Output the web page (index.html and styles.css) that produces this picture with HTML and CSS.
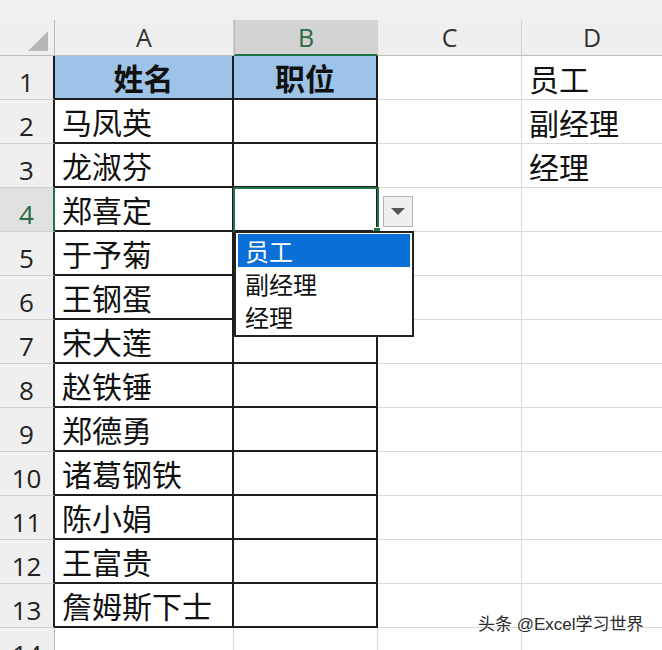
FILE: index.html
```html
<!DOCTYPE html>
<html lang="zh">
<head>
<meta charset="utf-8">
<link rel="stylesheet" href="styles.css">
</head>
<body>
<div class="sheet">
  <div class="strip"></div>

  <div class="ch corner"><span class="tri"></span></div>
  <div class="ch">A</div>
  <div class="ch sel">B</div>
  <div class="ch">C</div>
  <div class="ch last">D</div>

  <div class="rh">1</div><div class="c t hd">姓名</div><div class="c t hd">职位</div><div class="c"></div><div class="c d">员工</div>
  <div class="rh">2</div><div class="c t">马凤英</div><div class="c t"></div><div class="c"></div><div class="c d">副经理</div>
  <div class="rh">3</div><div class="c t">龙淑芬</div><div class="c t"></div><div class="c"></div><div class="c d">经理</div>
  <div class="rh rsel">4</div><div class="c t">郑喜定</div><div class="c t"></div><div class="c"></div><div class="c d"></div>
  <div class="rh">5</div><div class="c t">于予菊</div><div class="c t"></div><div class="c"></div><div class="c d"></div>
  <div class="rh">6</div><div class="c t">王钢蛋</div><div class="c t"></div><div class="c"></div><div class="c d"></div>
  <div class="rh">7</div><div class="c t">宋大莲</div><div class="c t"></div><div class="c"></div><div class="c d"></div>
  <div class="rh">8</div><div class="c t">赵铁锤</div><div class="c t"></div><div class="c"></div><div class="c d"></div>
  <div class="rh">9</div><div class="c t">郑德勇</div><div class="c t"></div><div class="c"></div><div class="c d"></div>
  <div class="rh">10</div><div class="c t">诸葛钢铁</div><div class="c t"></div><div class="c"></div><div class="c d"></div>
  <div class="rh">11</div><div class="c t">陈小娟</div><div class="c t"></div><div class="c"></div><div class="c d"></div>
  <div class="rh">12</div><div class="c t">王富贵</div><div class="c t"></div><div class="c"></div><div class="c d"></div>
  <div class="rh">13</div><div class="c t">詹姆斯下士</div><div class="c t"></div><div class="c"></div><div class="c d"></div>
  <div class="rh nb">14</div><div class="c"></div><div class="c"></div><div class="c"></div><div class="c d"></div>

  <div class="selbox"><span class="handle"></span></div>
  <div class="ddbtn"><span class="arrow"></span></div>
  <div class="ddlist">
    <div class="item on">员工</div>
    <div class="item">副经理</div>
    <div class="item">经理</div>
  </div>
  <div class="mark">头条 @Excel学习世界</div>
</div>
</body>
</html>
```

FILE: styles.css
```css
html, body {
  margin: 0;
  padding: 0;
  background: #ffffff;
}
body {
  width: 662px;
  height: 650px;
  overflow: hidden;
}
.sheet {
  position: relative;
  display: grid;
  grid-template-columns: 55px 179px 144px 144px 140px;
  grid-template-rows: 20px 36px repeat(13, 44px) 44px;
  font-family: "Noto Sans CJK SC", "Noto Sans", sans-serif;
  color: #111111;
}
.strip {
  grid-column: 1 / -1;
  background: #f0f0f0;
}
.ch {
  box-sizing: border-box;
  background: #efefef;
  border-right: 1px solid #cfcfcf;
  border-bottom: 1px solid #bcbcbc;
  display: flex;
  align-items: center;
  justify-content: center;
  font-family: "Open Sans", "Liberation Sans", sans-serif;
  font-size: 25px;
  color: #333333;
  line-height: 1;
}
.ch.last { border-right: none; }
.ch.sel {
  background: #d4d4d4;
  color: #2d6a45;
  border-bottom: 2px solid #217346;
  border-left: 1px solid #b8b8b8;
}
.corner {
  position: relative;
  border-right: 1px solid #bcbcbc;
}
.tri {
  position: absolute;
  right: 6px;
  bottom: 4px;
  width: 0;
  height: 0;
  border-left: 20px solid transparent;
  border-bottom: 20px solid #b7b7b7;
}
.rh {
  box-sizing: border-box;
  background: #efefef;
  border-right: 2px solid #1d1d1d;
  border-bottom: 1px solid #d0d0d0;
  display: flex;
  align-items: center;
  justify-content: center;
  padding-top: 8px;
  font-family: "Open Sans", "Liberation Sans", sans-serif;
  font-size: 26px;
  color: #222222;
  line-height: 1;
}
.rh.rsel {
  background: #e0e0e0;
  color: #2d6a45;
  border-right: 2px solid #217346;
}
.rh.nb {
  border-right: 1px solid #bcbcbc;
}
.c {
  box-sizing: border-box;
  border-right: 1px solid #d9d9d9;
  border-bottom: 1px solid #d9d9d9;
  display: flex;
  align-items: center;
  font-size: 30px;
  line-height: 1;
  padding-left: 7px;
  white-space: nowrap;
}
.c.d { border-right: none; }
.c.t {
  border-right: 2px solid #1d1d1d;
  border-bottom: 2px solid #1d1d1d;
}
.c.hd {
  background: #9dc3e8;
  font-weight: bold;
  justify-content: center;
  padding-left: 0;
}
.selbox {
  position: absolute;
  left: 233px;
  top: 187px;
  width: 146px;
  height: 46px;
  box-sizing: border-box;
  border: 2px solid #217346;
}
.handle {
  position: absolute;
  right: -4px;
  bottom: -4px;
  width: 6px;
  height: 6px;
  background: #217346;
  border: 1px solid #ffffff;
}
.ddbtn {
  position: absolute;
  left: 383px;
  top: 196px;
  width: 30px;
  height: 31px;
  box-sizing: border-box;
  background: #efefef;
  border: 1px solid #b4b4b4;
  display: flex;
  align-items: center;
  justify-content: center;
}
.arrow {
  width: 0;
  height: 0;
  border-left: 7px solid transparent;
  border-right: 7px solid transparent;
  border-top: 7px solid #555555;
}
.ddlist {
  position: absolute;
  left: 234px;
  top: 231px;
  width: 180px;
  height: 106px;
  box-sizing: border-box;
  background: #ffffff;
  border: 2px solid #222222;
  padding: 1px 2px;
  display: flex;
  flex-direction: column;
}
.item {
  height: 34px;
  display: flex;
  align-items: center;
  padding-left: 7px;
  font-size: 24px;
  line-height: 1;
  color: #111111;
}
.item.on {
  background: #0a6fd6;
  color: #ffffff;
}
.mark {
  position: absolute;
  left: 478px;
  top: 614px;
  font-family: "Liberation Sans", "Noto Sans CJK SC", sans-serif;
  font-size: 17px;
  line-height: 22px;
  color: #2a2a2a;
  text-shadow: 0 0 2px #ffffff, 0 0 2px #ffffff;
  white-space: nowrap;
}
```
